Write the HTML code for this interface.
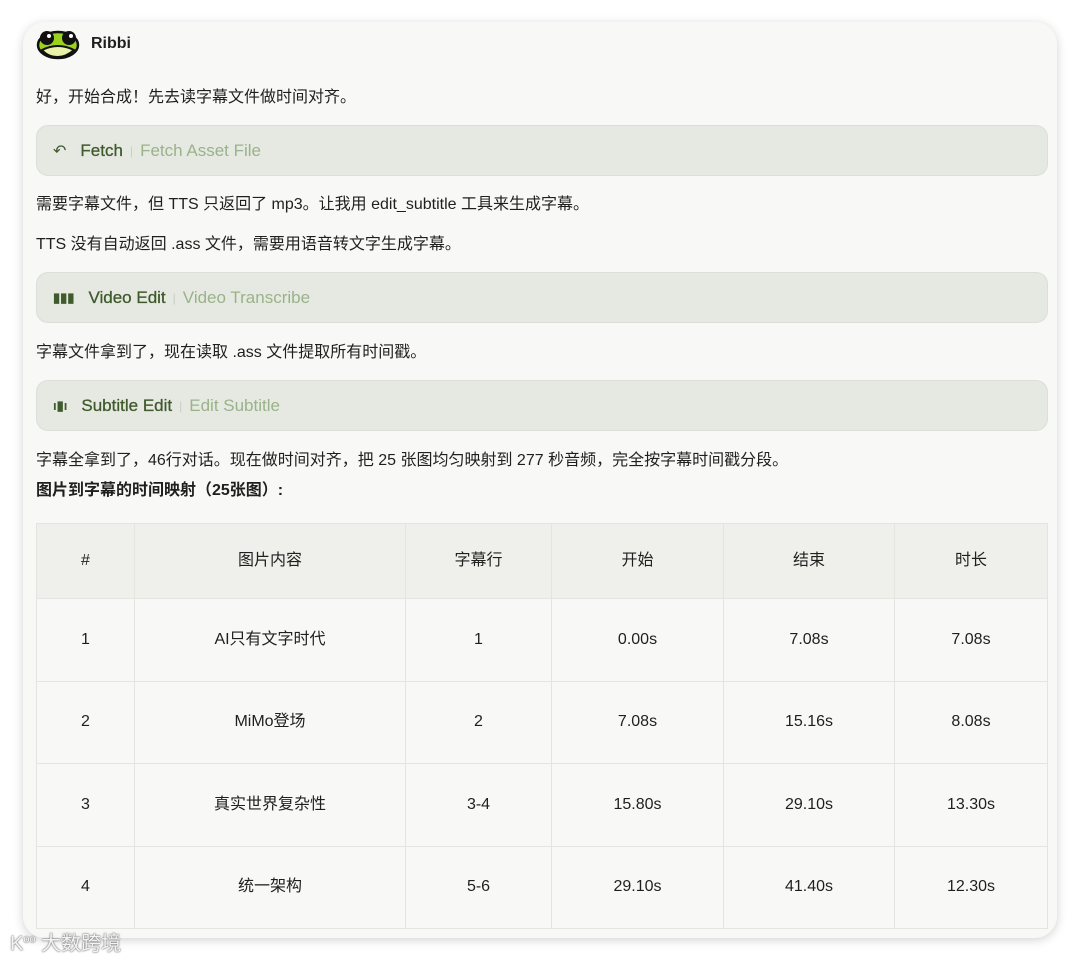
<!DOCTYPE html>
<html><head><meta charset="utf-8"><style>
*{margin:0;padding:0;box-sizing:border-box}
body{width:1080px;height:961px;background:#fff;font-family:"Liberation Sans","Noto Sans CJK SC",sans-serif;position:relative;overflow:hidden;color:#1f1f1f}
.card{position:absolute;left:23px;top:22px;width:1034px;height:916px;background:#f8f8f6;border-radius:22px;box-shadow:0 2px 10px rgba(0,0,0,.18);overflow:hidden}
.t{position:absolute;left:13px;font-size:16px;white-space:nowrap;line-height:20px}
.tool{position:absolute;left:13px;width:1012px;height:51px;background:#e6e9e2;border:1px solid #dcdfd8;border-radius:12px;font-size:17px;display:flex;align-items:center;padding-left:16px}
.tool b{font-weight:normal;color:#3f5a2c;margin-left:14px;-webkit-text-stroke:0.3px #3f5a2c}
.tool .sep{color:#c8cdc2;margin:0 7px;font-size:12px}
.tool .s{color:#9ab28a}
table{position:absolute;left:13px;top:501px;width:1012px;border-collapse:collapse;font-size:16px;text-align:center;line-height:20px}
td,th{border:1px solid #e4e4e0;font-weight:normal;vertical-align:middle}
td span,th span{display:inline-block;height:20px;line-height:20px;vertical-align:middle}
th{height:75px;background:#efefec}
td{height:82.5px;background:#f8f8f6}
</style></head><body>
<div class="card">
<svg style="position:absolute;left:13px;top:4px" width="44" height="34" viewBox="0 0 44 34"><ellipse cx="22" cy="19" rx="20" ry="13" fill="#9bd21e" stroke="#111" stroke-width="2.5"/><path d="M6 24 Q22 16 38 24 Q30 31 22 31 Q12 31 6 24Z" fill="#e8f2a8" stroke="#111" stroke-width="2"/><circle cx="11" cy="12" r="7" fill="#111"/><circle cx="33" cy="12" r="7" fill="#111"/><circle cx="13" cy="10" r="2" fill="#fff"/><circle cx="35" cy="10" r="2" fill="#fff"/></svg>
<div style="position:absolute;left:68px;top:13px;font-size:16px;font-weight:bold">Ribbi</div>
<div class="t" style="top:66px">好，开始合成！先去读字幕文件做时间对齐。</div>
<div class="tool" style="top:103px"><span style="color:#3f5a2c;font-size:16px">↶</span><b>Fetch</b><span class="sep">|</span><span class="s">Fetch Asset File</span></div>
<div class="t" style="top:173px">需要字幕文件，但 TTS 只返回了 mp3。让我用 edit_subtitle 工具来生成字幕。</div>
<div class="t" style="top:213px">TTS 没有自动返回 .ass 文件，需要用语音转文字生成字幕。</div>
<div class="tool" style="top:250px"><span style="color:#3f5a2c;font-size:13px;font-weight:bold">▮▮▮</span><b>Video Edit</b><span class="sep">|</span><span class="s">Video Transcribe</span></div>
<div class="t" style="top:321px">字幕文件拿到了，现在读取 .ass 文件提取所有时间戳。</div>
<div class="tool" style="top:358px"><span style="color:#3f5a2c;font-size:13px;font-weight:bold">ı▮ı</span><b>Subtitle Edit</b><span class="sep">|</span><span class="s">Edit Subtitle</span></div>
<div class="t" style="top:429px">字幕全拿到了，46行对话。现在做时间对齐，把 25 张图均匀映射到 277 秒音频，完全按字幕时间戳分段。</div>
<div class="t" style="top:459px;font-weight:bold">图片到字幕的时间映射（25张图）:</div>
<table>
<tr><th style="width:98px"><span>#</span></th><th style="width:271px"><span>图片内容</span></th><th style="width:146px"><span>字幕行</span></th><th style="width:172px"><span>开始</span></th><th style="width:171px"><span>结束</span></th><th><span>时长</span></th></tr>
<tr><td><span>1</span></td><td><span>AI只有文字时代</span></td><td><span>1</span></td><td><span>0.00s</span></td><td><span>7.08s</span></td><td><span>7.08s</span></td></tr>
<tr><td><span>2</span></td><td><span>MiMo登场</span></td><td><span>2</span></td><td><span>7.08s</span></td><td><span>15.16s</span></td><td><span>8.08s</span></td></tr>
<tr><td><span>3</span></td><td><span>真实世界复杂性</span></td><td><span>3-4</span></td><td><span>15.80s</span></td><td><span>29.10s</span></td><td><span>13.30s</span></td></tr>
<tr><td><span>4</span></td><td><span>统一架构</span></td><td><span>5-6</span></td><td><span>29.10s</span></td><td><span>41.40s</span></td><td><span>12.30s</span></td></tr>
</table>
</div>
<div style="position:absolute;left:10px;top:927px;font-size:20px;color:#f4f4f4;text-shadow:0 0 2px #777,0 0 1px #555">K<sup style="font-size:11px">oo</sup> 大数跨境</div>
</body></html>
